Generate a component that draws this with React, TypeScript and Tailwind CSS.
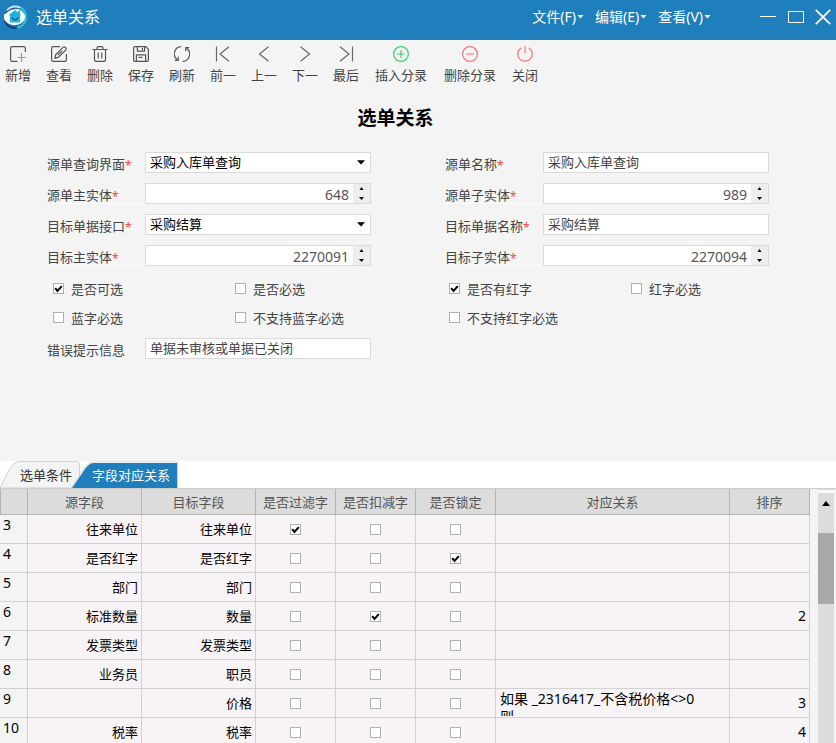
import { useState, type ReactNode } from 'react';

const menus = ['文件(F)', '编辑(E)', '查看(V)'];

// Toolbar glyphs, all on a 16x16 grid
const toolbar: { label: string; wide?: boolean; color: string; icon: ReactNode }[] = [
   {
      label: '新增',
      color: 'text-[#555]',
      icon: (
         <>
            <path d="M15.4 6V2.2Q15.4.6 13.8.6H2.2Q.6.6.6 2.2v11.6q0 1.6 1.6 1.6H7.500" />
            <path d="M7.500 11.500H16M11.500 7v9" stroke="#3fcf6f" />
         </>
      )
   },
   {
      label: '查看',
      color: 'text-[#555]',
      icon: (
         <>
            <path d="M9 .6H2.2Q.6.6.6 2.2v11.6q0 1.6 1.6 1.6h11.6q1.6 0 1.6-1.6V8" />
            <path d="M4 12.2l.6-3.400L12.2 1.200q1-.8 2 .1l.6.6q.8 1 0 1.900L7.300 11.400zM6.800 9.200l4.200-4.200" />
         </>
      )
   },
   {
      label: '删除',
      color: 'text-[#555]',
      icon: (
         <>
            <path d="M.5 3.500h15M5 3.200V2q0-1.400 1.400-1.400h3.200Q11 .6 11 2v1.200" />
            <path d="M2.500 3.600v10.200q0 1.600 1.600 1.600h7.800q1.600 0 1.600-1.600V3.600M6.200 6.500v6M9.800 6.500v6" />
         </>
      )
   },
   {
      label: '保存',
      color: 'text-[#555]',
      icon: (
         <>
            <path d="M2 .6h10.800l2.600 2.600V14q0 1.400-1.400 1.400H2Q.6 15.400.6 14V2Q.6.6 2 .6z" />
            <path d="M4.400.8v4.400h7.200V.8M9.400 2v2M3.400 15.200V8.800h9.200v6.400M5.500 11.400h4" />
         </>
      )
   },
   {
      label: '刷新',
      color: 'text-[#555]',
      icon: (
         <>
            <path d="M7.200.7A7.200 7.200 0 0 0 3.400 13.800M8.800 15.300A7.200 7.200 0 0 0 12.600 2.200" />
            <path d="M4.200 10.800v3.600H.8M11.800 5.200V1.600h3.400" />
         </>
      )
   },
   { label: '前一', color: 'text-[#666]', icon: <path d="M1.500.5v15M14 .8L5 8l9 7.200" /> },
   { label: '上一', color: 'text-[#666]', icon: <path d="M12.500.8L3.500 8l9 7.200" /> },
   { label: '下一', color: 'text-[#666]', icon: <path d="M3.500.8l9 7.200-9 7.200" /> },
   { label: '最后', color: 'text-[#666]', icon: <path d="M2 .8L11 8l-9 7.200M14.500.5v15" /> },
   {
      label: '插入分录',
      wide: true,
      color: 'text-[#3fcf6f]',
      icon: (
         <>
            <circle cx="8" cy="8" r="7.400" />
            <path d="M4.200 8h7.600M8 4.200v7.600" />
         </>
      )
   },
   {
      label: '删除分录',
      wide: true,
      color: 'text-[#f87878]',
      icon: (
         <>
            <circle cx="8" cy="8" r="7.400" />
            <path d="M4.200 8h7.600" />
         </>
      )
   },
   { label: '关闭', color: 'text-[#f87878]', icon: <path d="M8 0v7.500M4.400 1.700a7.200 7.200 0 1 0 7.200 0" /> }
];

const columns = [
   { title: '源字段', width: 'w-[114px]' },
   { title: '目标字段', width: 'w-[114px]' },
   { title: '是否过滤字', width: 'w-20' },
   { title: '是否扣减字', width: 'w-20' },
   { title: '是否锁定', width: 'w-20' },
   { title: '对应关系', width: '' },
   { title: '排序', width: 'w-20' }
];

const rows = [
   { no: 3, source: '往来单位', target: '往来单位', flags: [true, false, false], rule: '', order: '' },
   { no: 4, source: '是否红字', target: '是否红字', flags: [false, false, true], rule: '', order: '' },
   { no: 5, source: '部门', target: '部门', flags: [false, false, false], rule: '', order: '' },
   { no: 6, source: '标准数量', target: '数量', flags: [false, true, false], rule: '', order: '2' },
   { no: 7, source: '发票类型', target: '发票类型', flags: [false, false, false], rule: '', order: '' },
   { no: 8, source: '业务员', target: '职员', flags: [false, false, false], rule: '', order: '' },
   { no: 9, source: '', target: '价格', flags: [false, false, false], rule: '如果 _2316417_不含税价格<>0\n则', order: '3' },
   { no: 10, source: '税率', target: '税率', flags: [false, false, false], rule: '', order: '4' }
];

function Logo () {
   return (
      <svg width="24" height="24" viewBox="0 0 24 24" fill="none" aria-hidden="true">
         <circle cx="12.500" cy="12" r="10.500" fill="#1a6fae" />
         <path d="M4 5.500A10.800 10.800 0 0 1 20.500 5" stroke="#bdeaf5" strokeWidth="2" />
         <path d="M17 2.500A10.800 10.800 0 0 1 14 22.800" stroke="#25bfd6" strokeWidth="2.400" />
         <path d="M1.500 15A10.800 10.800 0 0 0 14 22.800" stroke="#123f80" strokeWidth="2" />
         <ellipse cx="11.500" cy="12" rx="10.700" ry="8.200" fill="#fff" />
         <path d="M2 8.500Q6 3.800 12 3.600" stroke="#1b4f92" strokeWidth="1.400" />
         <path d="M12 5l6.500 5.300h-1.300v7.200H6.800v-7.200H5.500z" fill="#25b2d8" />
         <path d="M15 6h2v4h-2z" fill="#25b2d8" />
         <path d="M9.200 12q.4 3 2.800 3t2.800-3" stroke="#155f9c" strokeWidth="1.300" />
      </svg>
   );
}

function TitleBar () {
   return (
      <header className="flex items-center bg-[#1f7ebc] pr-[5px] pb-[6px] pl-[3px] h-10 text-white">
         <Logo />
         <span className="ml-[9px] text-base leading-5">选单关系</span>
         <nav className="flex gap-[11px] ml-auto">
            {menus.map(menu => (
               <button key={menu} className="flex items-center gap-px text-sm leading-5 whitespace-nowrap">
                  {menu}
                  <svg width="7" height="4" viewBox="0 0 7 4" aria-hidden="true"><path d="M.5 0h6l-3 3.500z" fill="currentColor" /></svg>
               </button>
            ))}
         </nav>
         <div className="flex items-center gap-[10px] ml-12">
            <button aria-label="最小化" className="w-[18px]">
               <svg width="18" height="18" viewBox="0 0 18 18" stroke="currentColor"><path d="M1 8.500h16" /></svg>
            </button>
            <button aria-label="最大化">
               <svg width="18" height="18" viewBox="0 0 18 18" stroke="currentColor" fill="none"><path d="M1.500 3.500h15v11h-15z" /></svg>
            </button>
            <button aria-label="关闭窗口">
               <svg width="16" height="18" viewBox="0 0 16 18" stroke="currentColor" strokeWidth="1.800"><path d="M.8 1.800l14.400 14.400M15.200 1.800L.8 16.200" /></svg>
            </button>
         </div>
      </header>
   );
}

function Toolbar () {
   return (
      <div className="flex gap-[15px] pt-[6px] pl-[5px]">
         {toolbar.map(item => (
            <button
               key={item.label}
               className={`flex flex-col items-center gap-[3px] shrink-0 text-[#444] text-[13px] leading-5 whitespace-nowrap ${item.wide ? 'w-[54px]' : 'w-[26px]'}`}
            >
               <svg width="16" height="16" viewBox="0 0 16 16" fill="none" stroke="currentColor" strokeWidth="1.200" className={item.color} aria-hidden="true">
                  {item.icon}
               </svg>
               {item.label}
            </button>
         ))}
      </div>
   );
}

function CheckBox ({ checked, label }: { checked?: boolean; label?: string }) {
   return (
      <span className="inline-flex relative bg-white w-[11px] h-[11px]">
         <input
            type="checkbox"
            defaultChecked={checked}
            aria-label={label}
            className="peer border border-[#b0b0b0] w-[11px] h-[11px] appearance-none"
         />
         <svg viewBox="0 0 11 11" className="hidden peer-checked:block absolute inset-0 pointer-events-none" fill="none" stroke="#000" strokeWidth="2">
            <path d="M2.200 5.200l2.300 2.800 4.300-4.800" />
         </svg>
      </span>
   );
}

function LabeledCheck ({ label, checked }: { label: string; checked?: boolean }) {
   return (
      <label className="flex items-center gap-[7px] h-[29px] text-[#444] text-[13px] leading-5 whitespace-nowrap">
         <CheckBox checked={checked} />
         {label}
      </label>
   );
}

function Field ({ id, label, required = true, underline, children }: {
   id: string; label: string; required?: boolean; underline?: boolean; children: ReactNode;
}) {
   return (
      <div className="flex h-[21px]">
         <label
            htmlFor={id}
            className={`flex w-[98px] shrink-0 pt-[2px] text-[#444] text-[13px] leading-5 whitespace-nowrap ${underline ? 'border-b border-[#fcfcfc]' : ''}`}
         >
            {label}
            {required && <span className="pt-[2px] text-[#ff4040] text-xs leading-5">*</span>}
         </label>
         {children}
      </div>
   );
}

function TextField ({ id, label, value, required }: { id: string; label: string; value: string; required?: boolean }) {
   return (
      <Field id={id} label={label} required={required}>
         <input id={id} defaultValue={value} className="flex-1 bg-white px-1 border border-[#dadada] min-w-0 text-[#444] text-[13px]" />
      </Field>
   );
}

function SelectField ({ id, label, value }: { id: string; label: string; value: string }) {
   return (
      <Field id={id} label={label}>
         <div className="flex relative flex-1 min-w-0">
            <select id={id} className="bg-white px-1 border border-[#dadada] w-full text-[13px] text-black leading-[19px] appearance-none">
               <option>{value}</option>
            </select>
            <svg width="8" height="5" viewBox="0 0 8 5" className="top-2 right-[6px] absolute pointer-events-none"><path d="M0 .3h8L4 4.500z" /></svg>
         </div>
      </Field>
   );
}

function NumberField ({ id, label, value }: { id: string; label: string; value: number }) {
   const [num, setNum] = useState(value);

   return (
      <Field id={id} label={label} underline>
         <div className="flex flex-1 bg-white border border-[#dadada] min-w-0">
            <input
               id={id}
               inputMode="numeric"
               value={num}
               onChange={e => setNum(Number(e.target.value) || 0)}
               className="flex-1 pt-[3px] pr-1 min-w-0 text-[#555] text-sm text-right leading-4"
            />
            <div className="flex flex-col bg-[#eee] w-[17px]">
               <button aria-label="增加" onClick={() => setNum(num + 1)} type="button" className="flex flex-1 justify-center items-center">
                  <svg width="5" height="3" viewBox="0 0 5 3"><path d="M.500 3L2.500 0l2 3z" /></svg>
               </button>
               <button aria-label="减少" onClick={() => setNum(num - 1)} type="button" className="flex flex-1 justify-center items-center">
                  <svg width="5" height="3" viewBox="0 0 5 3"><path d="M0 0h5L2.500 3z" /></svg>
               </button>
            </div>
         </div>
      </Field>
   );
}

function RelationForm () {
   return (
      <form className="pb-[102px]">
         <h1 className="mt-[19px] pr-[45px] font-bold text-[19px] text-black text-center leading-7">选单关系</h1>
         <div className="gap-x-[74px] gap-y-[10px] grid grid-cols-2 mt-5 pr-[67px] pl-[47px]">
            <SelectField id="sourceView" label="源单查询界面" value="采购入库单查询" />
            <TextField id="sourceName" label="源单名称" value="采购入库单查询" />
            <NumberField id="sourceMain" label="源单主实体" value={648} />
            <NumberField id="sourceChild" label="源单子实体" value={989} />
            <SelectField id="targetApi" label="目标单据接口" value="采购结算" />
            <TextField id="targetName" label="目标单据名称" value="采购结算" />
            <NumberField id="targetMain" label="目标主实体" value={2270091} />
            <NumberField id="targetChild" label="目标子实体" value={2270094} />
         </div>
         <div className="gap-x-[74px] grid grid-cols-2 mt-2 pr-[67px] pl-[47px]">
            <div className="grid grid-cols-[182px_1fr] pl-[6px]">
               <LabeledCheck label="是否可选" checked />
               <LabeledCheck label="是否必选" />
               <LabeledCheck label="蓝字必选" />
               <LabeledCheck label="不支持蓝字必选" />
            </div>
            <div className="grid grid-cols-[182px_1fr] pl-1">
               <LabeledCheck label="是否有红字" checked />
               <LabeledCheck label="红字必选" />
               <LabeledCheck label="不支持红字必选" />
            </div>
         </div>
         <div className="gap-x-[74px] grid grid-cols-2 mt-[6px] pr-[67px] pl-[47px]">
            <TextField id="errorTip" label="错误提示信息" value="单据未审核或单据已关闭" required={false} />
         </div>
      </form>
   );
}

function Tabs () {
   return (
      <div role="tablist" className="flex bg-white border-[#cfcfcf] border-b h-7">
         <button role="tab" aria-selected={false} className="relative w-20 text-[#333] text-[13px] leading-5">
            <svg width="80" height="27" viewBox="0 0 80 27" className="top-0 left-0 absolute" aria-hidden="true">
               <path d="M0 27Q3 21 8 11 13 .5 20 .5h57q2.500 0 2.500 3V27z" fill="#f4f4f4" stroke="#cfcfcf" />
            </svg>
            <span className="relative pl-3">选单条件</span>
         </button>
         <button role="tab" aria-selected className="relative -ml-[9px] w-[108px] text-[13px] text-white leading-5">
            <svg width="108" height="27" viewBox="0 0 108 27" className="top-0 left-0 absolute" aria-hidden="true">
               <path d="M1 27L10 14Q17 2 22 2h84v25z" fill="#1f7ebc" />
               <path d="M0 27L9 13.500Q16 1 22 1h84.500v26" fill="none" stroke="#d4d4d4" />
            </svg>
            <span className="relative pl-3">字段对应关系</span>
         </button>
      </div>
   );
}

function FieldGrid () {
   return (
      <div className="flex flex-1 min-h-0 overflow-hidden">
         <div className="flex-1 min-w-0 overflow-hidden">
            <table className="w-full border-separate border-spacing-0 table-fixed">
               <thead>
                  <tr className="bg-[#dcdcdc] h-[26px] text-[#555] text-[13px] leading-5">
                     <th aria-label="行号" className="p-0 border-[#b4b4b4] border-r border-b border-l w-7" />
                     {columns.map(col => (
                        <th key={col.title} className={`p-0 border-[#b4b4b4] border-r border-b font-normal whitespace-nowrap ${col.width}`}>
                           {col.title}
                        </th>
                     ))}
                  </tr>
               </thead>
               <tbody>
                  {rows.map(row => (
                     <tr key={row.no} className="bg-[#f7f3f7] h-[29px] text-[13px] text-black leading-5">
                        <td className="bg-[#f4f4f4] p-0 pl-[3px] border-[#d2d2d4] border-r border-b text-sm align-top leading-5">{row.no}</td>
                        <td className="p-0 pr-[3px] border-[#d2d2d4] border-r border-b text-right">{row.source}</td>
                        <td className="p-0 pr-[3px] border-[#d2d2d4] border-r border-b text-right">{row.target}</td>
                        {row.flags.map((flag, i) => (
                           <td key={columns[i + 2].title} className="p-0 border-[#d2d2d4] border-r border-b">
                              <div className="flex justify-center">
                                 <CheckBox checked={flag} label={`${columns[i + 2].title} ${row.no}`} />
                              </div>
                           </td>
                        ))}
                        <td className="p-0 border-[#d2d2d4] border-r border-b align-top">
                           <div className="pt-px pl-1 h-[27px] overflow-hidden text-sm leading-[18px] whitespace-pre">{row.rule}</div>
                        </td>
                        <td className="p-0 pr-[3px] border-[#d2d2d4] border-r border-b text-sm text-right leading-5">{row.order}</td>
                     </tr>
                  ))}
               </tbody>
            </table>
         </div>
         {/* Scrollbar */}
         <div className="flex flex-col bg-[#dcdcdc] mr-[2px] ml-2 w-4">
            <div className="bg-[#f8f8f8] mt-px h-[3px]" />
            <button aria-label="向上滚动" className="flex justify-center items-center h-5">
               <svg width="8" height="5" viewBox="0 0 8 5"><path d="M4 0l4 5H0z" /></svg>
            </button>
            <div className="bg-[#a9a9a9] mt-5 h-[71px]" />
         </div>
      </div>
   );
}

export default function App () {
   return (
      <div className="flex flex-col bg-[#f4f4f4] h-screen overflow-hidden font-['Noto_Sans','Noto_Sans_CJK_SC',sans-serif]">
         <TitleBar />
         <Toolbar />
         <RelationForm />
         <Tabs />
         <FieldGrid />
      </div>
   );
}
